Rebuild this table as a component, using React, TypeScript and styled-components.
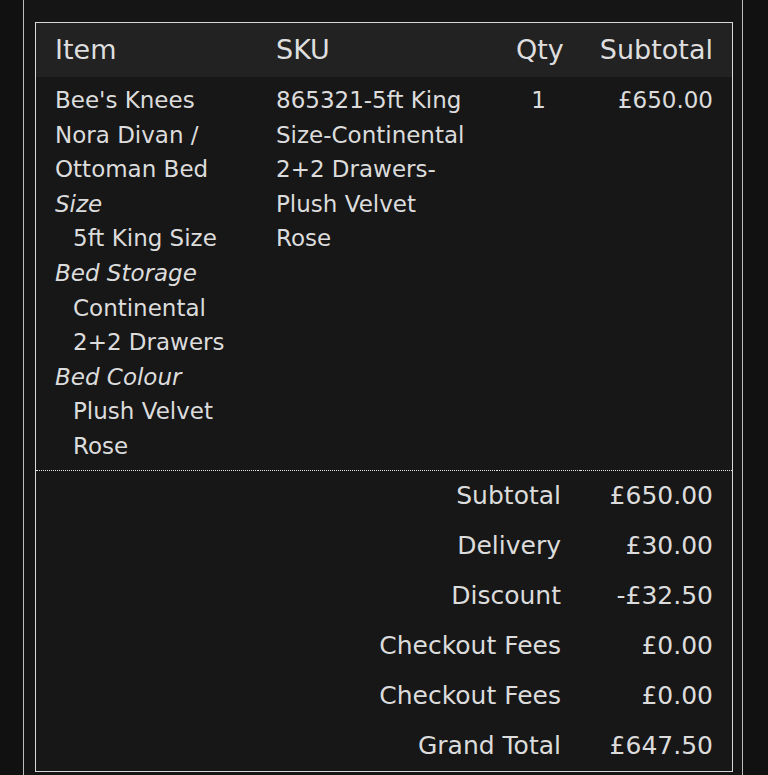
import React from "react";
import styled, { createGlobalStyle } from "styled-components";

const GlobalStyle = createGlobalStyle`
  html, body {
    margin: 0;
    padding: 0;
    background: #111111;
  }
  body {
    font-family: "DejaVu Sans", Verdana, sans-serif;
    color: #dcdcdc;
  }
`;

const Page = styled.div`
  box-sizing: border-box;
  width: 720px;
  min-height: 100vh;
  margin-left: 23px;
  padding: 22px 9px 24px 11px;
  border-left: 1px solid #bdbdbd;
  border-right: 1px solid #bdbdbd;
  background: #151515;
`;

const Table = styled.table`
  width: 698px;
  table-layout: fixed;
  border-collapse: separate;
  border-spacing: 0;
  border: 1px solid #d8d8d8;
  background: #171717;
`;

const HeadRow = styled.tr`
  background: #222222;
`;

const Th = styled.th<{ $align?: "left" | "center" | "right" }>`
  font-weight: normal;
  font-size: 27px;
  line-height: 34px;
  padding: 10px 19px;
  text-align: ${(p) => p.$align ?? "left"};
  color: #dedede;
  white-space: nowrap;
`;

const SkuTh = styled(Th)`
  padding-left: 18px;
`;

const Td = styled.td<{ $align?: "left" | "center" | "right" }>`
  vertical-align: top;
  font-size: 23px;
  line-height: 34.6px;
  padding: 6px 19px 6px;
  text-align: ${(p) => p.$align ?? "left"};
  border-bottom: 1px dotted #e2e2e2;
  color: #dcdcdc;
`;

const SkuTd = styled(Td)`
  padding-left: 18px;
  padding-right: 26px;
`;

const OptionLabel = styled.div`
  font-style: italic;
`;

const OptionValue = styled.div`
  padding-left: 18px;
`;

const TotalLabel = styled.td`
  font-size: 25px;
  line-height: 34px;
  padding: 8px 19px;
  text-align: right;
  color: #dcdcdc;
`;

const TotalValue = styled(TotalLabel)``;

const options = [
  { label: "Size", value: "5ft King Size" },
  { label: "Bed Storage", value: "Continental 2+2 Drawers" },
  { label: "Bed Colour", value: "Plush Velvet Rose" },
];

const totals = [
  { label: "Subtotal", value: "£650.00" },
  { label: "Delivery", value: "£30.00" },
  { label: "Discount", value: "-£32.50" },
  { label: "Checkout Fees", value: "£0.00" },
  { label: "Checkout Fees", value: "£0.00" },
  { label: "Grand Total", value: "£647.50" },
];

export default function App() {
  return (
    <>
      <GlobalStyle />
      <Page>
        <Table>
          <colgroup>
            <col style={{ width: 222 }} />
            <col style={{ width: 239 }} />
            <col style={{ width: 83 }} />
            <col style={{ width: 152 }} />
          </colgroup>
          <thead>
            <HeadRow>
              <Th>Item</Th>
              <SkuTh>SKU</SkuTh>
              <Th $align="center">Qty</Th>
              <Th $align="right">Subtotal</Th>
            </HeadRow>
          </thead>
          <tbody>
            <tr>
              <Td>
                <div>Bee's Knees Nora Divan / Ottoman Bed</div>
                {options.map((o) => (
                  <React.Fragment key={o.label}>
                    <OptionLabel>{o.label}</OptionLabel>
                    <OptionValue>{o.value}</OptionValue>
                  </React.Fragment>
                ))}
              </Td>
              <SkuTd>865321-5ft King Size-Continental 2+2 Drawers-Plush Velvet Rose</SkuTd>
              <Td $align="center">1</Td>
              <Td $align="right">£650.00</Td>
            </tr>
          </tbody>
          <tfoot>
            {totals.map((t, i) => (
              <tr key={i}>
                <TotalLabel colSpan={3}>{t.label}</TotalLabel>
                <TotalValue>{t.value}</TotalValue>
              </tr>
            ))}
          </tfoot>
        </Table>
      </Page>
    </>
  );
}
